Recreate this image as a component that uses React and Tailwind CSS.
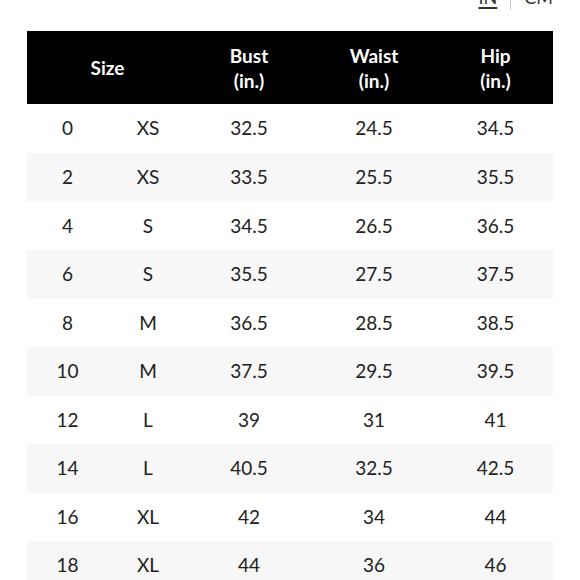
import React from "react";

// size chart rows: size, letter, bust, waist, hip
const ROWS = [
  ["0", "XS", "32.5", "24.5", "34.5"],
  ["2", "XS", "33.5", "25.5", "35.5"],
  ["4", "S", "34.5", "26.5", "36.5"],
  ["6", "S", "35.5", "27.5", "37.5"],
  ["8", "M", "36.5", "28.5", "38.5"],
  ["10", "M", "37.5", "29.5", "39.5"],
  ["12", "L", "39", "31", "41"],
  ["14", "L", "40.5", "32.5", "42.5"],
  ["16", "XL", "42", "34", "44"],
  ["18", "XL", "44", "36", "46"],
];

const COLS = ["w-[81px]", "w-[80px]", "w-[122px]", "w-[128px]", "w-[115px]"];

const App = () => {
  return (
    <div className="w-[580px] h-[580px] overflow-hidden bg-white font-['Lato',sans-serif] text-[#222]">
      {/* unit toggle, mostly scrolled off the top */}
      <div className="h-[31px] flex justify-end items-start pr-[27px]">
        <div className="-mt-[13px] flex items-start text-[18px] leading-[20px] text-[#333]">
          <span className="underline underline-offset-[3px] decoration-[1.5px]">IN</span>
          <span className="mx-[13px] w-px h-[23px] bg-[#ccc]"></span>
          <span>CM</span>
        </div>
      </div>

      <div className="mx-[27px] w-[526px]">
        {/* header */}
        <div className="h-[73px] bg-black text-white font-bold text-[19px] leading-[25px] flex items-center">
          <div className="w-[161px] text-center">Size</div>
          <div className="w-[122px] text-center">
            Bust
            <br />
            (in.)
          </div>
          <div className="w-[128px] text-center">
            Waist
            <br />
            (in.)
          </div>
          <div className="w-[115px] text-center">
            Hip
            <br />
            (in.)
          </div>
        </div>

        {ROWS.map((row, i) => (
          <div
            key={row[0]}
            className={`flex items-center text-[19px] ${
              i === 0 ? "h-[49px]" : "h-[48.5px]"
            } ${i % 2 === 1 ? "bg-[#f7f7f7]" : "bg-white"}`}
          >
            {row.map((cell, j) => (
              <div key={j} className={`${COLS[j]} text-center`}>
                {cell}
              </div>
            ))}
          </div>
        ))}
      </div>
    </div>
  );
};

export default App;
